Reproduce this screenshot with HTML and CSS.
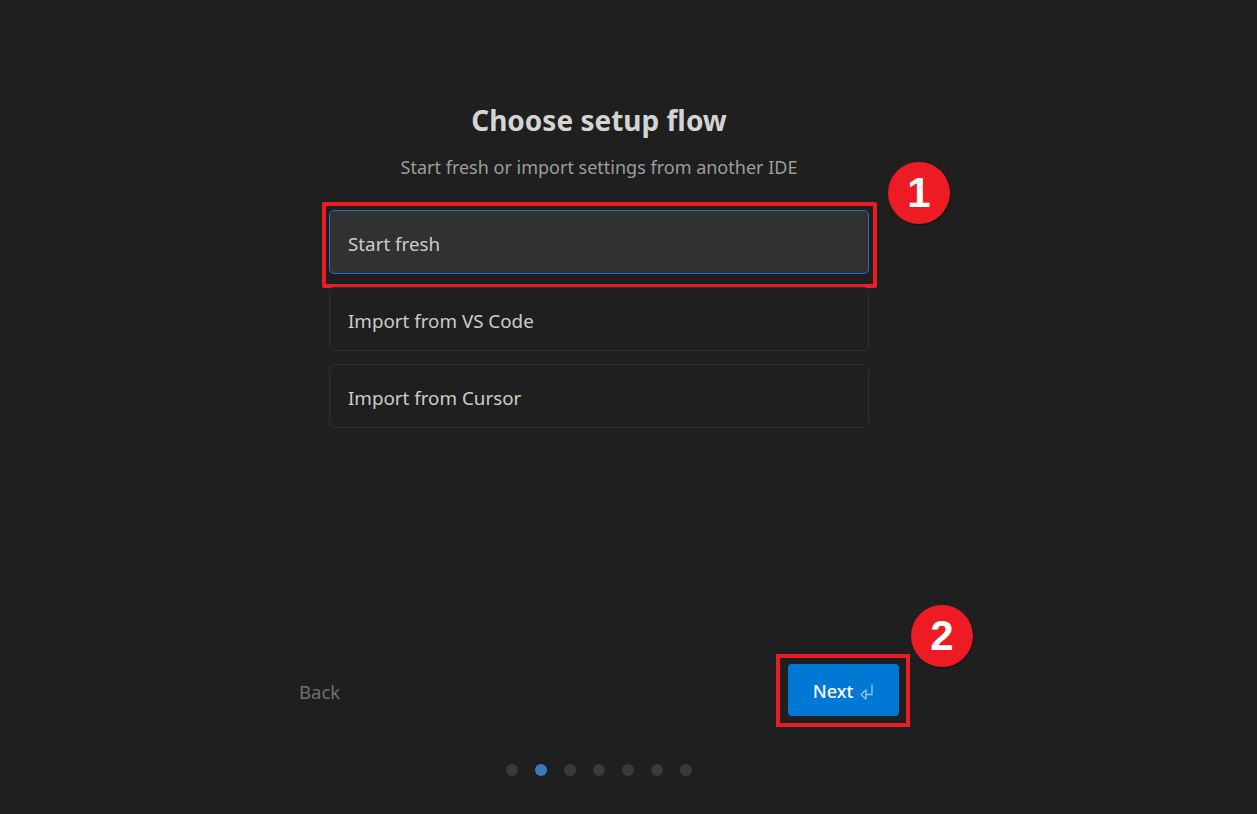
FILE: index.html
```html
<!DOCTYPE html>
<html lang="en">
<head>
<meta charset="utf-8">
<title>Choose setup flow</title>
<link rel="stylesheet" href="styles.css">
</head>
<body>
<div class="page">
  <main class="setup">
    <h1 class="title">Choose setup flow</h1>
    <p class="subtitle">Start fresh or import settings from another IDE</p>
    <div class="options">
      <div class="option selected">
        <span>Start fresh</span>
        <span class="callout callout-option"></span>
        <span class="badge badge-one">1</span>
      </div>
      <div class="option"><span>Import from VS Code</span></div>
      <div class="option"><span>Import from Cursor</span></div>
    </div>
  </main>
  <footer class="footer">
    <div class="nav">
      <button class="back" type="button">Back</button>
      <button class="next" type="button">
        <span>Next</span>
        <svg class="enter" width="15" height="17" viewBox="0 0 15 17" aria-hidden="true">
          <path d="M13 1.5 V11.5 H7" fill="none" stroke="currentColor" stroke-width="1.3"/>
          <path d="M7 7 L2 11.5 L7 16 Z" fill="none" stroke="currentColor" stroke-width="1.3" stroke-linejoin="round"/>
        </svg>
        <span class="callout callout-next"></span>
        <span class="badge badge-two">2</span>
      </button>
    </div>
    <div class="dots">
      <span class="dot"></span>
      <span class="dot active"></span>
      <span class="dot"></span>
      <span class="dot"></span>
      <span class="dot"></span>
      <span class="dot"></span>
      <span class="dot"></span>
    </div>
  </footer>
</div>
</body>
</html>
```

FILE: styles.css
```css
* { box-sizing: border-box; }

html, body {
  margin: 0;
  padding: 0;
  background: #1f1f1f;
  height: 100%;
}

body {
  font-family: "Noto Sans", "Open Sans", "Liberation Sans", sans-serif;
  color: #cccccc;
  overflow: hidden;
}

.page {
  width: 1198px;
  height: 814px;
  display: flex;
  flex-direction: column;
  align-items: center;
  justify-content: space-between;
}

.setup {
  width: 540px;
  padding-top: 102px;
  display: flex;
  flex-direction: column;
  align-items: center;
}

.title {
  margin: 0;
  font-size: 28px;
  line-height: 36px;
  font-weight: 700;
  color: #d4d4d4;
}

.subtitle {
  margin: 17px 0 0;
  font-size: 18px;
  line-height: 24px;
  color: #9d9d9d;
}

.options {
  width: 540px;
  margin-top: 31px;
  display: flex;
  flex-direction: column;
  gap: 13px;
}

.option {
  position: relative;
  height: 64px;
  display: flex;
  align-items: center;
  padding: 3px 18px 0;
  border: 1px solid #2e2e2e;
  border-radius: 5px;
  background: #1f1f1f;
  font-size: 18.8px;
  color: #cccccc;
}

.option.selected {
  background: #313131;
  border-color: #1b73c4;
}

.callout {
  position: absolute;
  border: 4px solid #ec1c24;
  pointer-events: none;
}

.callout-option {
  left: -8px;
  top: -9px;
  width: 555px;
  height: 86px;
  border-radius: 2px;
}

.badge {
  position: absolute;
  width: 62px;
  height: 62px;
  border-radius: 50%;
  background: #ed1c24;
  box-shadow: 1px 1px 1px rgba(0, 0, 0, 0.55);
  color: #ffffff;
  font-family: "Liberation Sans", Arial, sans-serif;
  font-weight: 700;
  font-size: 42px;
  line-height: 62px;
  text-align: center;
}

.badge-one {
  left: 558px;
  top: -49px;
}

.footer {
  width: 600px;
  padding-bottom: 38px;
  display: flex;
  flex-direction: column;
  align-items: center;
  gap: 48px;
}

.nav {
  width: 600px;
  display: flex;
  justify-content: space-between;
  align-items: center;
}

.back {
  background: none;
  border: none;
  padding: 3px 0 0;
  font-family: inherit;
  font-size: 18.5px;
  line-height: 24px;
  color: #6f6f6f;
}

.next {
  position: relative;
  width: 111px;
  height: 52px;
  display: flex;
  align-items: center;
  justify-content: center;
  gap: 6px;
  padding: 2px 0 0;
  border: none;
  border-radius: 4px;
  background: #0078d4;
  color: #ffffff;
  font-family: inherit;
  font-size: 18px;
  font-weight: 500;
}

.enter {
  color: rgba(200, 225, 250, 0.75);
  margin-top: 0;
}

.callout-next {
  left: -12px;
  top: -10px;
  width: 134px;
  height: 73px;
}

.badge-two {
  left: 123px;
  top: -59px;
}

.dots {
  display: flex;
  gap: 17px;
  margin-left: -1px;
}

.dot {
  width: 12px;
  height: 12px;
  border-radius: 50%;
  background: #3a3a3a;
}

.dot.active {
  background: #3a7bbd;
}
```
